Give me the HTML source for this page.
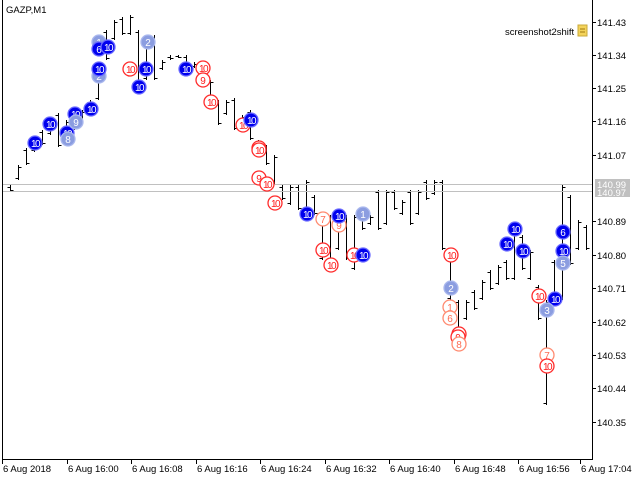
<!DOCTYPE html>
<html><head><meta charset="utf-8"><style>
html,body{margin:0;padding:0;background:#fff;}
svg{display:block;font-family:"Liberation Sans",sans-serif;}
</style></head><body>
<svg id="s" width="640" height="480" xmlns="http://www.w3.org/2000/svg">
<rect width="640" height="480" fill="#fff"/>
<g id="bars" stroke="#000" stroke-width="1" fill="none" shape-rendering="crispEdges"></g>
<line x1="2" y1="184.5" x2="592" y2="184.5" stroke="#c0c0c0"/>
<line x1="2" y1="191.5" x2="592" y2="191.5" stroke="#c0c0c0"/>
<g id="mk"></g>
<g shape-rendering="crispEdges" stroke="#000">
<line x1="2.5" y1="0" x2="2.5" y2="459"/>
<line x1="2" y1="459.5" x2="593" y2="459.5"/>
<line x1="592.5" y1="0" x2="592.5" y2="460"/>
</g>
<g id="ax" font-size="9.5" fill="#000"></g>
<rect x="595" y="179" width="35" height="18" fill="#c0c0c0"/>
<text x="597" y="188" font-size="9.5" fill="#fff">140.99</text>
<text x="597" y="196" font-size="9.5" fill="#fff">140.97</text>
<text x="6" y="13" font-size="9.5">GAZP,M1</text>
<text x="505" y="35" font-size="9.5">screenshot2shift</text>
<rect x="578" y="25" width="9" height="11" fill="#f4d35a" stroke="#c9a93a"/>
<line x1="580" y1="29" x2="585" y2="29" stroke="#a07a10"/>
<line x1="580" y1="32" x2="585" y2="32" stroke="#a07a10"/>
</svg>
<script>
var NS="http://www.w3.org/2000/svg";
function el(p,t,a,txt){var e=document.createElementNS(NS,t);for(var k in a)e.setAttribute(k,a[k]);if(txt!=null)e.textContent=txt;document.getElementById(p).appendChild(e);}
var B=[[10,185,192],[18,165,180],[26,148,165],[34,138,152],[42,130,145],[50,120,135],[58,113,147],[66,120,135],[74,115,130],[82,110,125],[90,100,115],[98,80,100],[106,30,60],[114,20,40],[122,17,35],[130,15,35],[138,30,90],[146,35,80],[154,35,80],[162,60,70],[170,55,60],[178,55,58],[186,55,65],[194,62,68],[202,65,85],[210,80,105],[218,100,125],[226,100,115],[234,98,130],[242,115,130],[250,110,140],[258,140,155],[266,145,165],[274,155,185],[282,185,200],[290,185,205],[298,185,210],[306,180,210],[314,195,215],[322,215,260],[330,215,270],[338,215,250],[346,215,260],[354,215,270],[362,210,230],[370,215,225],[378,190,230],[386,190,225],[394,190,210],[402,200,215],[410,190,225],[418,190,215],[426,180,200],[434,180,195],[442,180,250],[450,250,300],[458,300,340],[466,300,320],[474,290,310],[482,280,300],[490,270,290],[498,265,285],[506,260,280],[514,230,280],[522,235,270],[530,250,280],[538,285,320],[546,300,405],[554,260,300],[562,185,300],[570,195,265],[578,220,250],[586,225,250]];
B.forEach(function(b,i){var x=b[0]+.5,h=b[1],l=b[2];var o=i%2?l-2:h+2,c=i%2?h+2:l-2;
el("bars","line",{x1:x,y1:h,x2:x,y2:l});el("bars","line",{x1:x-3,y1:o+.5,x2:x,y2:o+.5});el("bars","line",{x1:x,y1:c+.5,x2:x+3,y2:c+.5});});
var M=[[35,143,"b","10"],[50,124,"b","10"],[67,133,"b","10"],[75,114,"b","10"],[91,109,"b","10"],[68,139,"l","8"],[76,122,"l","9"],[99,42,"l","1"],[99,49,"b","6"],[108,47,"b","10"],[99,76,"l","2"],[99,69,"b","10"],[139,87,"b","10"],[146,69,"b","10"],[148,42,"l","2"],[186,69,"b","10"],[130,69,"r","10"],[203,68,"r","10"],[203,80,"r","9"],[211,102,"r","10"],[243,125,"r","10"],[251,120,"b","10"],[259,148,"r","10"],[259,150,"r","10"],[259,178,"r","9"],[267,184,"r","10"],[275,203,"r","10"],[307,214,"b","10"],[323,219,"p","7"],[339,225,"p","9"],[339,216,"b","10"],[363,214,"l","1"],[323,250,"r","10"],[331,265,"r","10"],[354,255,"r","10"],[363,255,"b","10"],[451,255,"r","10"],[451,288,"l","2"],[450,307,"p","1"],[450,318,"p","6"],[459,334,"r","10"],[458,337,"r","9"],[459,344,"p","8"],[515,229,"b","10"],[507,244,"b","10"],[523,251,"b","10"],[563,232,"b","6"],[563,251,"b","10"],[563,263,"l","5"],[539,296,"r","10"],[555,299,"b","10"],[547,310,"l","3"],[547,355,"p","7"],[547,366,"r","10"]];
M.forEach(function(m){var x=m[0],y=m[1],t=m[2];
var fill=t=="b"?"#0000ee":t=="l"?"#8b9de0":"#fff",st=t=="b"?"#6a6aff":t=="l"?"#aab8ee":t=="r"?"#ff2a2a":"#ff8a70",tc=(t=="b"||t=="l")?"#fff":(t=="r"?"#ff1a1a":"#ff6a50");
el("mk","circle",{cx:x,cy:y,r:7,fill:fill,stroke:st,"stroke-width":1.3});
el("mk","text",{x:x,y:y+4,"font-size":10,"text-anchor":"middle",fill:tc,"letter-spacing":m[3].length>1?"-1.5":"0"},m[3]);});
var P=[["141.43",22],["141.34",55],["141.25",88],["141.16",121],["141.07",155],["140.89",221],["140.80",255],["140.71",288],["140.62",322],["140.53",355],["140.44",388],["140.35",422]];
P.forEach(function(p){el("ax","line",{x1:592,y1:p[1]+.5,x2:596,y2:p[1]+.5,stroke:"#000","shape-rendering":"crispEdges"});el("ax","text",{x:597,y:p[1]+4},p[0]);});
var T=["6 Aug 2018","6 Aug 16:00","6 Aug 16:08","6 Aug 16:16","6 Aug 16:24","6 Aug 16:32","6 Aug 16:40","6 Aug 16:48","6 Aug 16:56","6 Aug 17:04"];
T.forEach(function(t,i){var x=2+i*64.5;if(i==9)x=580;el("ax","line",{x1:Math.round(x)+.5,y1:459,x2:Math.round(x)+.5,y2:464,stroke:"#000","shape-rendering":"crispEdges"});el("ax","text",{x:Math.round(x)+1,y:472},t);});
</script>
</body></html>
